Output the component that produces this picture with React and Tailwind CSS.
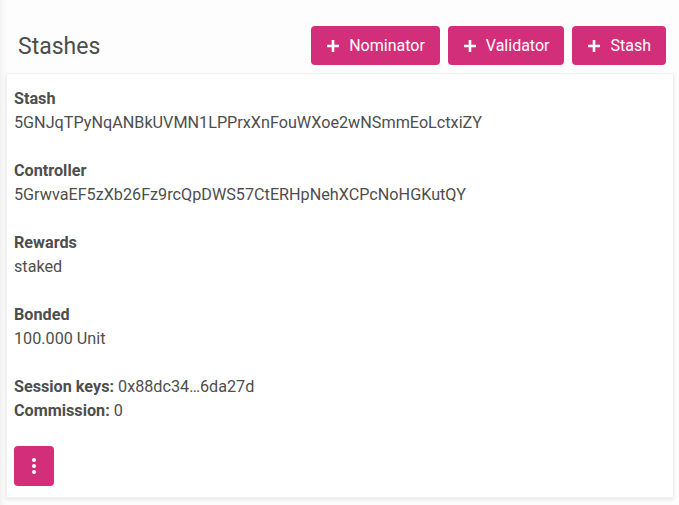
import React from "react";

const Plus = () => (
  <svg width="14" height="14" viewBox="0 0 14 14" className="shrink-0">
    <path d="M7 1v12M1 7h12" stroke="white" strokeWidth="2.6" />
  </svg>
);

const AddButton = ({ label }) => (
  <button className="flex items-center gap-[9px] h-[39px] px-[15px] rounded-[4px] bg-[#d32e79] text-white text-[16px]">
    <Plus />
    {label}
  </button>
);

const Field = ({ label, value }) => (
  <div className="mb-[24px]">
    <div className="font-bold leading-[24px]">{label}</div>
    <div className="leading-[24px]">{value}</div>
  </div>
);

export default function App() {
  return (
    <div
      className="min-h-[505px] bg-[#fdfdfd] shadow-[inset_6px_0_6px_-4px_rgba(0,0,0,0.06)] text-[#4e4e4e] text-[16.2px]"
      style={{ fontFamily: 'Roboto, "Liberation Sans", sans-serif' }}
    >
      <div className="flex items-center justify-between pl-[18px] pr-[13px] pt-[26px] pb-[8px]">
        <h1 className="mt-[3px] text-[23px] text-[#4d4d4d]">Stashes</h1>
        <div className="flex gap-[8px]">
          <AddButton label="Nominator" />
          <AddButton label="Validator" />
          <AddButton label="Stash" />
        </div>
      </div>

      <div className="mx-[6px] mr-[5px] bg-white border border-[#f0f0f0] shadow-[0_2px_4px_rgba(0,0,0,0.08)] px-[7px] pt-[13px] pb-[10px]">
        <Field label="Stash" value="5GNJqTPyNqANBkUVMN1LPPrxXnFouWXoe2wNSmmEoLctxiZY" />
        <Field label="Controller" value="5GrwvaEF5zXb26Fz9rcQpDWS57CtERHpNehXCPcNoHGKutQY" />
        <Field label="Rewards" value="staked" />
        <Field label="Bonded" value="100.000 Unit" />
        <div className="leading-[24px]">
          <span className="font-bold">Session keys:</span> 0x88dc34…6da27d
        </div>
        <div className="leading-[24px]">
          <span className="font-bold">Commission:</span> 0
        </div>
        <button className="mt-[23px] mb-[1px] w-[40px] h-[40px] rounded-[4px] bg-[#d32e79] flex flex-col items-center justify-center gap-[2px]">
          <span className="w-[4px] h-[4px] rounded-full bg-white" />
          <span className="w-[4px] h-[4px] rounded-full bg-white" />
          <span className="w-[4px] h-[4px] rounded-full bg-white" />
        </button>
      </div>
    </div>
  );
}
